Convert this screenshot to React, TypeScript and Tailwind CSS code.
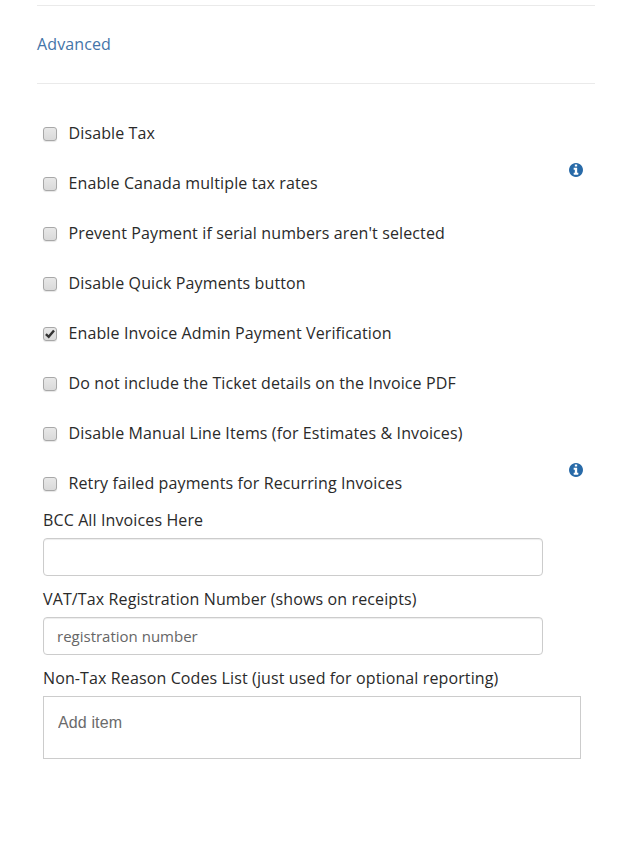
import React, { useState } from 'react';

interface Option {
  label: string;
  checked?: boolean;
  info?: boolean;
}

const options: Option[] = [
  { label: 'Disable Tax' },
  { label: 'Enable Canada multiple tax rates', info: true },
  { label: "Prevent Payment if serial numbers aren't selected" },
  { label: 'Disable Quick Payments button' },
  { label: 'Enable Invoice Admin Payment Verification', checked: true },
  { label: 'Do not include the Ticket details on the Invoice PDF' },
  { label: 'Disable Manual Line Items (for Estimates & Invoices)' },
  { label: 'Retry failed payments for Recurring Invoices', info: true },
];

const InfoIcon: React.FC<{ className?: string }> = ({ className }) => (
  <svg viewBox="0 128 1536 1536" fill="currentColor" className={className}>
    <path d="M1024 1376v-160q0-14-9-23t-23-9h-96v-512q0-14-9-23t-23-9h-320q-14 0-23 9t-9 23v160q0 14 9 23t23 9h96v320h-96q-14 0-23 9t-9 23v160q0 14 9 23t23 9h448q14 0 23-9t9-23zm-128-896v-160q0-14-9-23t-23-9h-192q-14 0-23 9t-9 23v160q0 14 9 23t23 9h192q14 0 23-9t9-23zm640 416q0 209-103 385.5t-279.5 279.5-385.5 103-385.5-103-279.5-279.5-103-385.5 103-385.5 279.5-279.5 385.5-103 385.5 103 279.5 279.5 103 385.5z" />
  </svg>
);

const OptionRow: React.FC<{ option: Option }> = ({ option }) => {
  const [checked, setChecked] = useState(!!option.checked);

  return (
    <div className="flex h-[50px] items-center justify-between pr-[12px]">
      <label className="flex items-center">
        <span className="relative mt-[2px] mr-[11.5px] block h-[14px] w-[14px]">
          <input
            type="checkbox"
            checked={checked}
            onChange={() => setChecked(!checked)}
            className="block h-[14px] w-[14px] appearance-none rounded-[3px] border border-[#a8a8a8] bg-linear-to-b from-[#e8e8e8] to-[#dadada] shadow-[0_1px_1px_rgba(0,0,0,0.1)]"
          />
          {checked && (
            <svg viewBox="0 0 14 14" className="pointer-events-none absolute inset-0 h-[14px] w-[14px]">
              <path d="M2.9 7.2 L5.7 9.8 L11 3.4" fill="none" stroke="#333" strokeWidth="2.4" />
            </svg>
          )}
        </span>
        {option.label}
      </label>
      {option.info && <InfoIcon className="-mt-[26px] h-[14px] w-[14px] text-[#286aa8]" />}
    </div>
  );
};

const inputClass =
  'block h-[38px] w-[500px] rounded-[4px] border border-[#ccc] bg-white px-[13px] text-[15px] tracking-normal text-[#555] shadow-[inset_0_1px_1px_rgba(0,0,0,0.075)] outline-none placeholder:text-[#666]';

const App: React.FC = () => {
  return (
    <div className="min-h-[852px] bg-white pt-[5px] pr-[38px] pl-[37px] font-['Open_Sans',sans-serif] text-[16px] leading-[24px] tracking-[0.12px] text-[#2a2a2a]">
      <div className="flex h-[79px] items-center border-y border-[#eaeaea] pb-[2px]">
        <a href="#" className="text-[#4474a8]">Advanced</a>
      </div>

      <div className="pt-[24px] pl-[6px]">
        {options.map((option) => (
          <OptionRow key={option.label} option={option} />
        ))}

        <label className="block">
          <span className="block h-[30px]">BCC All Invoices Here</span>
          <input type="text" className={inputClass} />
        </label>

        <label className="mt-[11px] block">
          <span className="block h-[30px]">VAT/Tax Registration Number (shows on receipts)</span>
          <input type="text" placeholder="registration number" className={inputClass} />
        </label>

        <label className="mt-[11px] block">
          <span className="block h-[30px]">Non-Tax Reason Codes List (just used for optional reporting)</span>
          <span className="block h-[63px] w-[538px] border border-[#ccc] px-[14px] pt-[14px] font-['Liberation_Sans',sans-serif]">
            <input type="text" placeholder="Add item" className="block h-[24px] w-full outline-none placeholder:text-[#6b6b6b]" />
          </span>
        </label>
      </div>
    </div>
  );
};

export default App;
